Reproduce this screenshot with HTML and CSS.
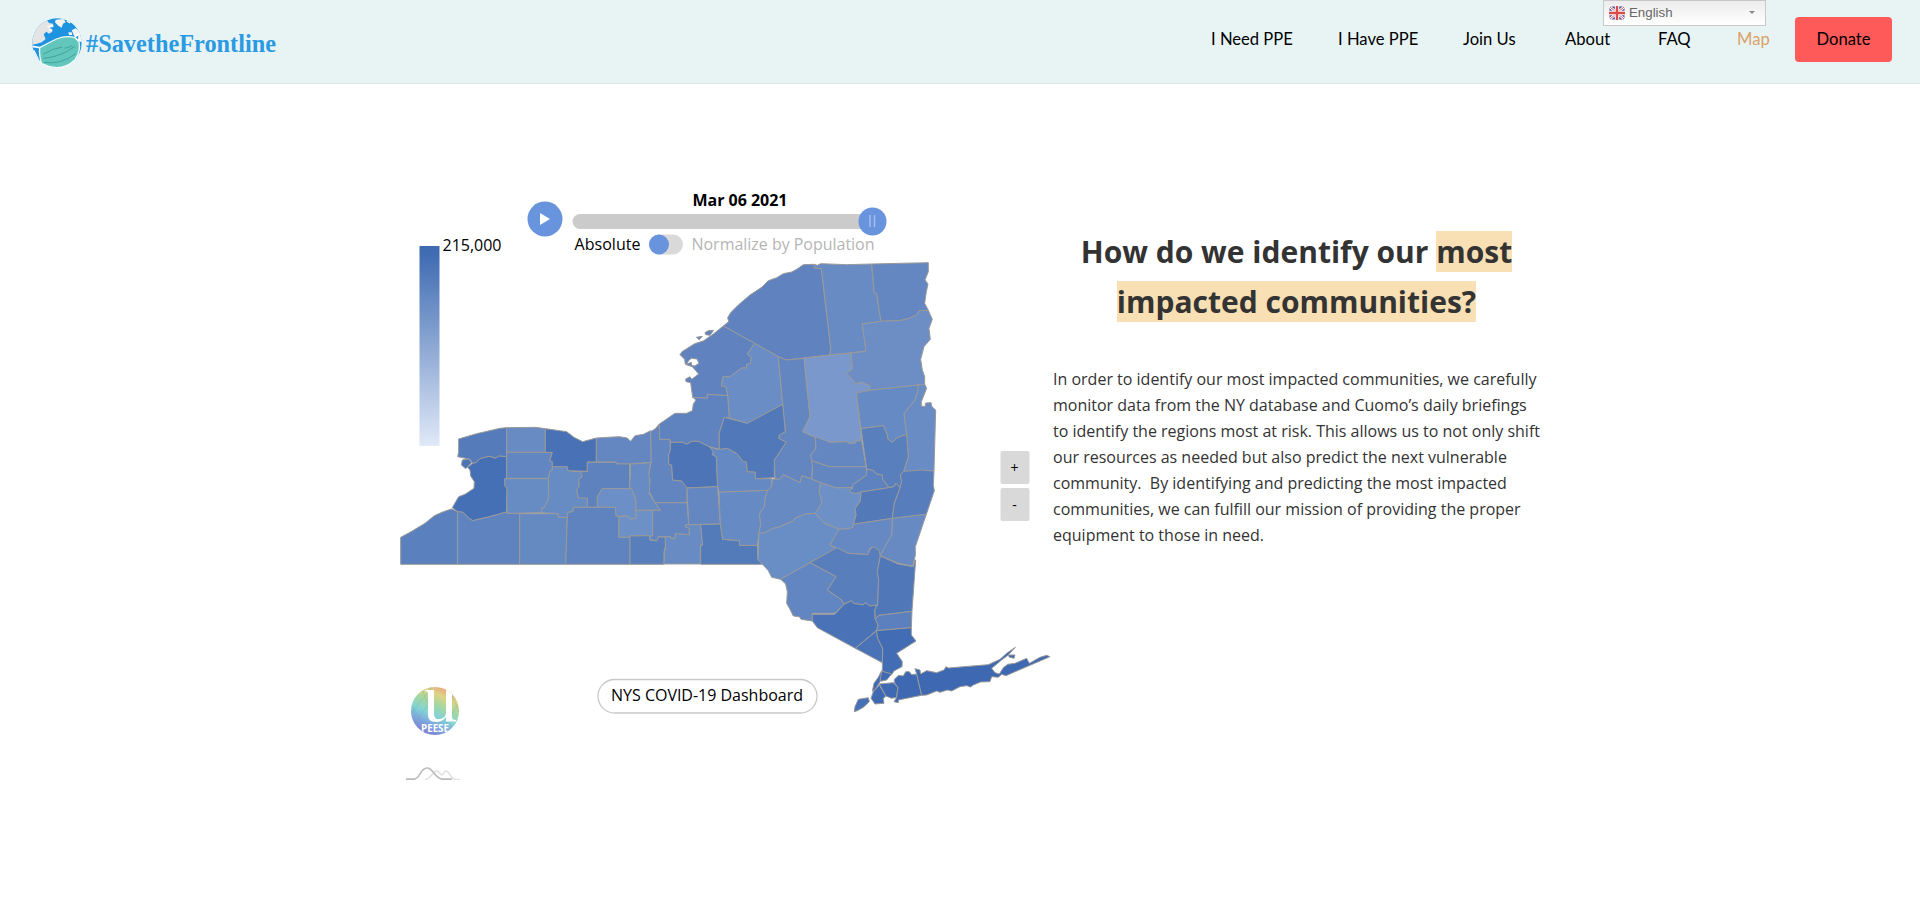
FILE: index.html
```html
<!DOCTYPE html>
<html lang="en">
<head>
<meta charset="utf-8">
<title>#SavetheFrontline - Map</title>
<link rel="stylesheet" href="styles.css">
</head>
<body>
<header class="header">
  <a class="brand">
    <svg class="globe" width="52" height="52" viewBox="0 0 156 156">
      <defs><clipPath id="g"><circle cx="78" cy="78" r="74"/></clipPath></defs>
      <circle cx="78" cy="78" r="76" fill="#f4fafa"/>
      <g clip-path="url(#g)">
        <rect width="156" height="156" fill="#1e93e0"/>
        <path d="M0 84 L4 40 L30 12 L48 10 L54 18 L66 20 L68 30 L58 32 L64 44 L54 50 L46 44 L38 52 L44 66 L32 76 L18 80Z" fill="#e4e4e6"/>
        <path d="M74 8 L98 6 L104 16 L96 20 L92 32 L82 26 L72 16Z M122 40 L134 34 L156 50 V78 L140 70 L142 56 L130 58Z M112 46 l10 0 l2 8 l-10 0Z" fill="#f3f3f4"/>
        <path d="M50 30 l14 -5 M54 38 l10 2 M108 12 l10 5" stroke="#fff" stroke-width="5"/>
        <path d="M4 88 L26 92 M24 132 L8 100 M132 60 L146 48 M140 68 L156 72" stroke="#fff" stroke-width="5" fill="none"/>
      </g>
      <path d="M26 92 Q52 78 76 66 Q108 54 132 62 L144 74 Q150 104 132 128 Q108 152 76 152 Q52 150 32 140 Q24 118 26 92Z" fill="#62c6bd" stroke="#f4fcfb" stroke-width="4"/>
      <path d="M36 112 Q64 94 94 90 M38 124 Q88 120 132 88 M40 136 Q90 144 134 110 M100 94 Q112 92 124 86" fill="none" stroke="#3c9c96" stroke-width="2.5"/>
    </svg>
    <svg class="wordmark" width="200" height="44"><text x="2" y="28" textLength="190" lengthAdjust="spacingAndGlyphs">#SavetheFrontline</text></svg>
  </a>
  <nav class="nav">
    <a>I Need PPE</a><a>I Have PPE</a><a>Join Us</a><a>About</a><a>FAQ</a><a class="current">Map</a><a class="donate">Donate</a>
  </nav>
  <div class="lang">
    <svg width="16" height="14" viewBox="0 0 16 14"><rect x=".5" y=".5" width="15" height="13" rx="2" fill="#4a4f9b"/><path d="M1 1L15 13M15 1L1 13" stroke="#fff" stroke-width="2.6"/><path d="M1 1L15 13M15 1L1 13" stroke="#d8605f" stroke-width="1"/><path d="M8 0V14M0 7H16" stroke="#fff" stroke-width="4.4"/><path d="M8 0V14M0 7H16" stroke="#dc4a4a" stroke-width="2.4"/></svg>
    <span>English</span><i class="caret"></i>
  </div>
</header>
<main class="main">
  <section class="chart">
    <svg width="660" height="600" viewBox="390 180 660 600">
      <defs>
        <linearGradient id="heat" x1="0" y1="0" x2="0" y2="1"><stop offset="0" stop-color="#3e6ab1"/><stop offset=".05" stop-color="#416db3"/><stop offset="1" stop-color="#e0e9f7"/></linearGradient>
        <linearGradient id="rainbow" x1=".3" y1="1" x2=".75" y2="0"><stop offset="0" stop-color="#8078d6"/><stop offset=".22" stop-color="#7da3e0"/><stop offset=".42" stop-color="#84d4d4"/><stop offset=".62" stop-color="#a5d8a0"/><stop offset=".8" stop-color="#dfd384"/><stop offset="1" stop-color="#e59f83"/></linearGradient>
        <clipPath id="logo"><circle cx="435" cy="711" r="24"/></clipPath>
      </defs>
      <rect x="419.500" y="246" width="20" height="200" fill="url(#heat)"/>
      <text x="442.500" y="251" textLength="59">215,000</text>
      <circle cx="545" cy="219" r="17.500" fill="#6893dd"/><path d="M540 213V225L550 219Z" fill="#fff"/>
      <text class="date" x="740" y="206" text-anchor="middle" textLength="95">Mar 06 2021</text>
      <rect x="572.500" y="214" width="308" height="15" rx="7.500" fill="#cbcbcb"/>
      <circle cx="872.500" cy="221.500" r="14" fill="#6893dd"/><path d="M870 215V227M874.500 215V227" stroke="#a4bee9" stroke-width="1.500"/>
      <text x="574.500" y="250" textLength="66">Absolute</text>
      <rect x="649" y="234.500" width="34" height="20" rx="10" fill="#d9d9d9"/><circle cx="659" cy="244.500" r="10" fill="#6893dd"/>
      <text class="muted" x="691.500" y="250" textLength="183">Normalize by Population</text>

      <g class="counties" transform="scale(.33333)">
        <!-- northern counties -->
        <g transform="translate(1980 750)">
          <path fill="#6083bf" d="M190 228L206 215 203 203 212 188 235 165 270 135 305 112 325 92 350 83 370 71 395 66 410 58 430 44 463 43 463 54 484 56 512 292 510 315 378 330 355 320 284 280Z"/>
          <path fill="#688bc4" d="M463 54V43L472 46 482 41 560 44 635 42 643 130 650 131 656 170 663 214 607 222 618 304 510 315 512 292 484 56Z"/>
          <path fill="#6487c1" d="M635 42L805 38 805 65 795 90 804 102 799 125 794 160 805 181 778 182 770 195 750 204 725 211 663 214 656 170 650 131 643 130Z"/>
          <path fill="#6c8ec5" d="M663 214L725 211 750 204 770 195 778 182 805 181 817 208 807 235 811 268 792 290 782 328 787 360 794 380 794 403 629 421 629 408 605 397 588 402 560 370 577 355 573 309 618 304 607 222Z"/>
          <path fill="#6083bf" d="M190 228L284 280 262 312 274 322 271 341 260 343 260 354 245 354 209 381 190 379 184 408 198 410 203 437 142 433 142 445 98 442 92 398 78 395 77 387 90 380 95 388 116 372 97 350 76 343 74 328 60 314 66 305 104 281 130 273 160 252Z"/>
          <path fill="#fff" d="M85 333L94 325 111 327 117 340 104 348 94 345 94 337 80 342Z"/>
          <path fill="#6083bf" d="M135 248L145 242 161 241 150 256 137 254Z M109 262L127 259 118 269Z"/>
          <path fill="#698dc4" d="M284 280L355 320 368 463 263 520 208 504 203 437 198 410 184 408 190 379 209 381 245 354 260 354 260 343 271 341 274 322 262 312Z"/>
          <path fill="#6386c0" d="M355 320L378 330 432 325 450 500 428 545 466 562 468 595 452 615 458 640 455 687 426 677 420 698 370 674 360 688 345 687 343 630 378 577 356 565 358 555 376 545 368 463Z"/>
          <path fill="#7b98cc" d="M432 325L510 315 573 309 577 355 560 370 588 402 605 397 629 408 629 421 589 429 605 570 588 572 585 580 563 580 562 575 510 577 466 562 428 545 450 500Z"/>
          <path fill="#668ac3" d="M589 429L629 421 775 405 772 430 765 450 732 490 740 553 711 563 698 577 684 568 682 555 670 527 603 536Z"/>
          <path fill="#698cc4" d="M775 405L794 403 800 415 784 455 784 468 795 470 797 459 813 458 816 470 827 480 822 663 731 665 745 620 740 553 732 490 765 450 772 430Z"/>
        </g>
        <!-- western counties -->
        <g transform="translate(1170 1230)">
          <path fill="#557bba" d="M206 87L260 71 330 55 350 53V140L325 138 318 145 297 139 270 146 258 158 248 160 240 148 203 140 206 125Z"/>
          <path fill="#4670b5" d="M248 160L258 158 270 146 297 139 318 145 325 138 350 140V205L344 208 345 228 351 235 350 306 300 320 248 332 232 321 219 307 203 305 187 293 206 260 225 253 252 235 253 215 242 198 240 180 233 172Z"/>
          <path fill="#4b73b6" d="M217 150L237 147 245 158 227 176 214 165Z"/>
          <path fill="#5a80bd" d="M32 382L60 367 105 340 133 317 160 305 185 297 203 305V463H32Z"/>
          <path fill="#5f83bf" d="M203 305L219 307 232 321 248 332 300 320 350 306 351 310 389 311V463H203Z"/>
          <path fill="#658ac2" d="M389 311H504L506 322H532L527 463H389Z"/>
          <path fill="#688bc4" d="M350 53L437 52 466 56V127H350Z"/>
          <path fill="#6286c1" d="M350 127H487L479 152 487 155V180L480 183 475 205H350Z"/>
          <path fill="#678bc3" d="M344 206H475L476 265 463 292 455 295 454 308 351 310V235L345 228Z"/>
          <path fill="#678bc3" d="M487 170H532L534 182 572 185 577 200 566 208 568 230 560 238 565 263H592V292H550L549 305 534 307 532 322H506L504 311 454 308 455 295 463 292 476 265 475 205 480 183 487 180Z"/>
          <path fill="#4971b6" d="M466 56L530 65 552 82 578 95 619 84V156H592V184L534 182 532 170H487V155L479 152 487 127H466Z"/>
          <path fill="#6487c1" d="M619 84L688 80 712 84 722 94 735 77 760 73 782 62 784 157 722 162H680L677 156H619Z"/>
          <path fill="#5d82be" d="M572 185H592V157H677L680 162H719V236H636L622 262V292H592V264H565L560 238 568 230 566 208 577 200Z"/>
          <path fill="#6b8fc6" d="M636 236H725L738 270V325L722 327 712 318 678 319 676 292H622V262Z"/>
          <path fill="#688bc4" d="M722 162L782 158 777 185 780 225 778 250 793 275 812 300 738 301V270L725 236H719Z"/>
          <path fill="#6d91c7" d="M738 301H788V380L778 377 720 378V382H686V320L712 318 722 327 738 325Z"/>
          <path fill="#5f83bf" d="M534 307L549 305 550 292H676L678 319H686V382H720V463H527L532 322Z"/>
          <path fill="#587fbb" d="M720 378L778 377 780 390 800 393 805 381H826V410L822 425V463H720Z"/>
        </g>
        <!-- central and capital counties -->
        <g transform="translate(1920 1200)">
          <path fill="#6285c0" d="M32 95L46 86 58 72 59 118H90L91 150 86 165V192L95 195 98 240 125 243 141 262V308H45L28 275 30 240 26 225 34 185Z"/>
          <path fill="#5f83bf" d="M58 72L105 40 140 40 157 32 160 12 168 0 158-8 202-5V-17L263-13 268 54 253 52 238 98V148L208 140 175 124 155 124 140 133 128 127H91L90 118H59Z"/>
          <path fill="#4d74b7" d="M91 127H128L140 133 155 124 175 124 208 140 220 155 217 164 229 170 233 260 141 264 125 243 98 240 95 195 86 192 86 165 91 150Z"/>
          <path fill="#6589c2" d="M208 140L230 148 262 145 290 160 310 185H319L322 215H346L347 236H395V258L384 271 237 277 233 260 229 170 217 164 220 155Z"/>
          <path fill="#5178b8" d="M253 52L322 70 428 13 436 95 418 105 416 115 438 127 403 180V233L347 236 346 216 322 215 319 185H310L290 160 262 145 238 148V98Z"/>
          <path fill="#6487c2" d="M141 264L233 260 241 372 146 374Z"/>
          <path fill="#6386c1" d="M45 308H141L146 374H136V380L148 385V404L106 401V415H92V410H55L50 423 30 418V408H38V331H62Z"/>
          <path fill="#688bc4" d="M146 374H182L188 435H181V492H72L74 450 77 445 76 410H92V415H106V401L148 404V385L136 380V374Z"/>
          <path fill="#537ab9" d="M182 374L241 372 248 418 298 422 299 436H352L354 480 368 493H182V437L188 435Z"/>
          <path fill="#668ac3" d="M237 277L384 271 376 290 373 320 358 342 362 372 357 400 352 436H299L298 422 248 418 241 372Z"/>
          <path fill="#678ac3" d="M384 271L395 258 397 237 420 238 430 224 480 248 486 227 515 237 542 248 538 275 546 308 526 340 493 343 465 355 460 363 420 380 400 385 375 398 357 400 362 372 358 342 373 320 376 290Z"/>
          <path fill="#6487c1" d="M526 110L570 127 622 125 625 130H645L648 124 665 121 678 200H567L515 182 512 165 528 145Z"/>
          <path fill="#6386c1" d="M515 182L567 200H678L680 225 638 255V262L590 264 542 248 515 237 518 207Z"/>
          <path fill="#5a7fbd" d="M663 86L730 77 742 105 744 118 758 127 771 113 800 103 805 170 791 214 781 225 785 245 780 263 768 250 762 260 747 263 728 238 727 225 710 222 700 212 680 207Z"/>
          <path fill="#5e82bf" d="M680 207L700 212 710 222 727 225 728 238 747 263 663 276 655 283 638 280 628 272 638 265V255L680 225Z"/>
          <path fill="#5379b9" d="M663 276L747 263 762 260 768 250 780 263 763 310 757 355 640 373 648 345 645 325 660 305Z"/>
          <path fill="#587dbc" d="M791 214L845 210 882 213 880 255 883 272 859 343 757 355 763 310 780 263 785 245 781 225Z"/>
          <path fill="#6d90c7" d="M542 248L590 264 638 262 628 272 638 280 663 278 660 305 645 325 648 345 640 373V380L628 386 597 388 550 368 526 340 546 308 538 275Z"/>
          <path fill="#698dc5" d="M357 400L375 398 400 385 420 380 460 363 465 355 493 343 526 340 550 368 597 388 570 435 590 445 510 488 422 538 395 532 385 512 368 493 354 480Z"/>
          <path fill="#678ac3" d="M757 355L859 343 826 440V466L818 498 775 490 721 467 740 430 755 405Z"/>
          <path fill="#6689c3" d="M597 388L628 386 640 380V373L757 355 755 405 740 430 721 467 718 457 700 441 690 445 683 464 625 460 570 435Z"/>
        </g>
        <!-- Hudson valley, the city and Long Island -->
        <g transform="translate(2220 1620)">
          <path fill="#587ebc" d="M210 68L290 23 325 40 383 44 390 28 400 20 418 32 421 48 412 95 416 120 413 195 390 198 375 188 370 195 340 190 335 182 312 193 305 180 262 150 288 110Z"/>
          <path fill="#6286c1" d="M122 118L210 68 288 110 262 150 305 180 312 193 284 220H217V243L183 238 178 230 160 228 150 208 140 190 142 155 137 132Z"/>
          <path fill="#5078b9" d="M421 48L475 72 520 80 524 60H527L516 214 418 226 405 237 404 205 413 195 416 120 412 95Z"/>
          <path fill="#5c80bd" d="M405 237L418 226 516 214 514 263 409 272 414 255Z"/>
          <path fill="#4a72b7" d="M312 193L335 182 340 190 370 195 375 188 390 198 410 195 404 210 405 237 414 255 409 272 346 325 232 263 217 243V223H284Z"/>
          <path fill="#4a73b7" d="M346 325L409 273 413 295 428 325 427 368Z"/>
          <path fill="#426cb4" d="M409 272L514 263V285L528 303 470 340 487 365 486 380 462 393 455 404 427 394 428 325 413 295Z"/>
          <path fill="#406ab3" d="M427 394L455 402 440 420 422 424 420 405Z"/>
          <path fill="#406ab3" d="M425 392L420 425 405 450 397 454 402 430 415 412Z"/>
          <path fill="#3f6ab3" d="M418 432L460 428 474 442 470 472 455 475 437 468Z"/>
          <path fill="#3e69b2" d="M418 435L437 468 430 476 432 490 405 492 393 475 400 455Z"/>
          <path fill="#3e69b2" d="M463 418L476 406 490 408 497 395 508 395 515 404 530 402 545 466 475 480 475 488 462 485 470 472 474 442 463 428Z"/>
          <path fill="#3e69b2" d="M530 402L525 386 540 390 542 402 560 392 590 398 612 390 618 380 625 384 745 374 780 358 800 340 826 322 805 345 785 360 755 385 765 398 778 402 790 383 803 373 825 370 860 355 868 370 900 352 920 346 930 350 798 407 785 403 775 412 755 410 750 425 722 426 700 435 692 441 680 437 660 440 635 453 622 450 600 457 590 453 560 465 545 466Z"/>
          <path fill="#3e69b2" d="M805 345L825 345 822 355 808 352Z"/>
          <path fill="#4671b5" d="M343 515L345 500 355 478 385 473 388 485 370 502 352 512Z"/>
        </g>
      </g>

      <g class="zoom"><rect x="1000.500" y="451" width="29" height="33" rx="2"/><rect x="1000.500" y="488" width="29" height="33" rx="2"/><text x="1014.500" y="473">+</text><text x="1014.500" y="510">-</text></g>
      <rect x="598" y="679.500" width="219" height="33.500" rx="16.700" fill="#fff" stroke="#c9c9c9" stroke-width="1.300"/>
      <text x="611" y="701" textLength="192">NYS COVID-19 Dashboard</text>
      <g clip-path="url(#logo)">
        <rect x="411" y="687" width="48" height="48" fill="url(#rainbow)"/>
        <path d="M411 714L432 687M413 725L432 700M422 689L440 735M430 687L436 735M448 687L459 712M411 705L430 735M440 735L459 702" fill="none" stroke="#6fae9a" stroke-opacity=".45" stroke-width=".7"/>
        <path d="M425 690H434V713C434 718 436 719 439 719C443 719 446 717 446 712V690H452V717C452 719 453 720 456 720V721.500H446V717C444 720 440 722 436 722C430 722 428 719 428 714V694C428 692 427 691 425 691Z" fill="#fff"/>
        <text class="peese" x="435" y="731.500" text-anchor="middle" textLength="28" lengthAdjust="spacingAndGlyphs">PEESE</text>
      </g>
      <g fill="none" stroke-width="1.700"><path stroke="#e2e2e2" d="M425 779.500C431 779.500 432 771 437 771C440 771 440 775 442 775C444 775 443 771 446 771C450 771 450 779.500 456 779.500H460"/><path stroke="#bcbcbc" d="M406 779.200H414C420 779.200 420 768 427 768C434 768 434 779.200 443 779.200H452"/></g>
    </svg>
  </section>
  <section class="copy">
    <h1>How do we identify our <mark>most<br>impacted communities?</mark></h1>
    <p>In order to identify our most impacted communities, we carefully<br>monitor data from the NY database and Cuomo’s daily briefings<br>to identify the regions most at risk. This allows us to not only shift<br>our resources as needed but also predict the next vulnerable<br>community.&nbsp; By identifying and predicting the most impacted<br>communities, we can fulfill our mission of providing the proper<br>equipment to those in need.</p>
  </section>
</main>
</body>
</html>
```
FILE: styles.css
```css
* { box-sizing: border-box; }
body { margin: 0; background: #fff; font-family: "Open Sans", "Noto Sans", sans-serif; color: #333; }
.header { position: relative; height: 84px; padding: 17px 28px 0 31px; background: #e8f4f4; border-bottom: 1px solid #dbe6e6; display: flex; justify-content: space-between; align-items: flex-start; }
.brand { display: flex; align-items: flex-start; gap: 1px; }
.globe { display: block; }
.wordmark { display: block; margin-top: 7px; overflow: visible; }
.wordmark text { font: bold 25px "Liberation Serif", serif; fill: #2b9ae3; }
.nav { display: grid; grid-template-columns: 127px 125px 102px 93px 79px 58px 97px; font: 16.6px/44px Lato, "Open Sans", sans-serif; color: #000; white-space: nowrap; }
.nav .current { color: #dba26a; }
.nav .donate { height: 45px; background: #ff5a5a; border-radius: 4px; text-align: center; }
.lang { position: absolute; left: 1603px; top: 0; width: 163px; height: 26px; padding: 0 10px 1px 5px; display: flex; align-items: center; gap: 4px; border: 1px solid #c8c8c8; background: linear-gradient(#ececec, #fff); font: 13.3px "Liberation Sans", Arial, sans-serif; color: #666; }
.caret { margin-left: auto; border: 3px solid transparent; border-top: 3px solid #888; border-bottom: 0; }
.main { display: flex; padding-top: 96px; padding-left: 390px; }
.chart { width: 660px; flex: none; }
.chart svg { display: block; overflow: hidden; }
.chart text { font-size: 16px; fill: #000; }
.chart .date { font-weight: bold; }
.chart .muted { fill: #b5b5b5; }
.chart .peese { font-size: 10px; font-weight: bold; fill: #fff; }
.counties path { stroke: #999; stroke-width: 3; stroke-linejoin: round; }
.zoom rect { fill: #d9d9d9; }
.zoom text { text-anchor: middle; font-size: 14px; }
.copy { width: 490px; padding-top: 47px; padding-left: 3px; }
h1 { margin: 0; font-size: 30px; line-height: 50px; text-align: center; font-weight: bold; }
mark { background: #f8dfb4; color: inherit; }
p { margin: 39px 0 0; font-size: 16px; line-height: 26px; white-space: nowrap; }
```
